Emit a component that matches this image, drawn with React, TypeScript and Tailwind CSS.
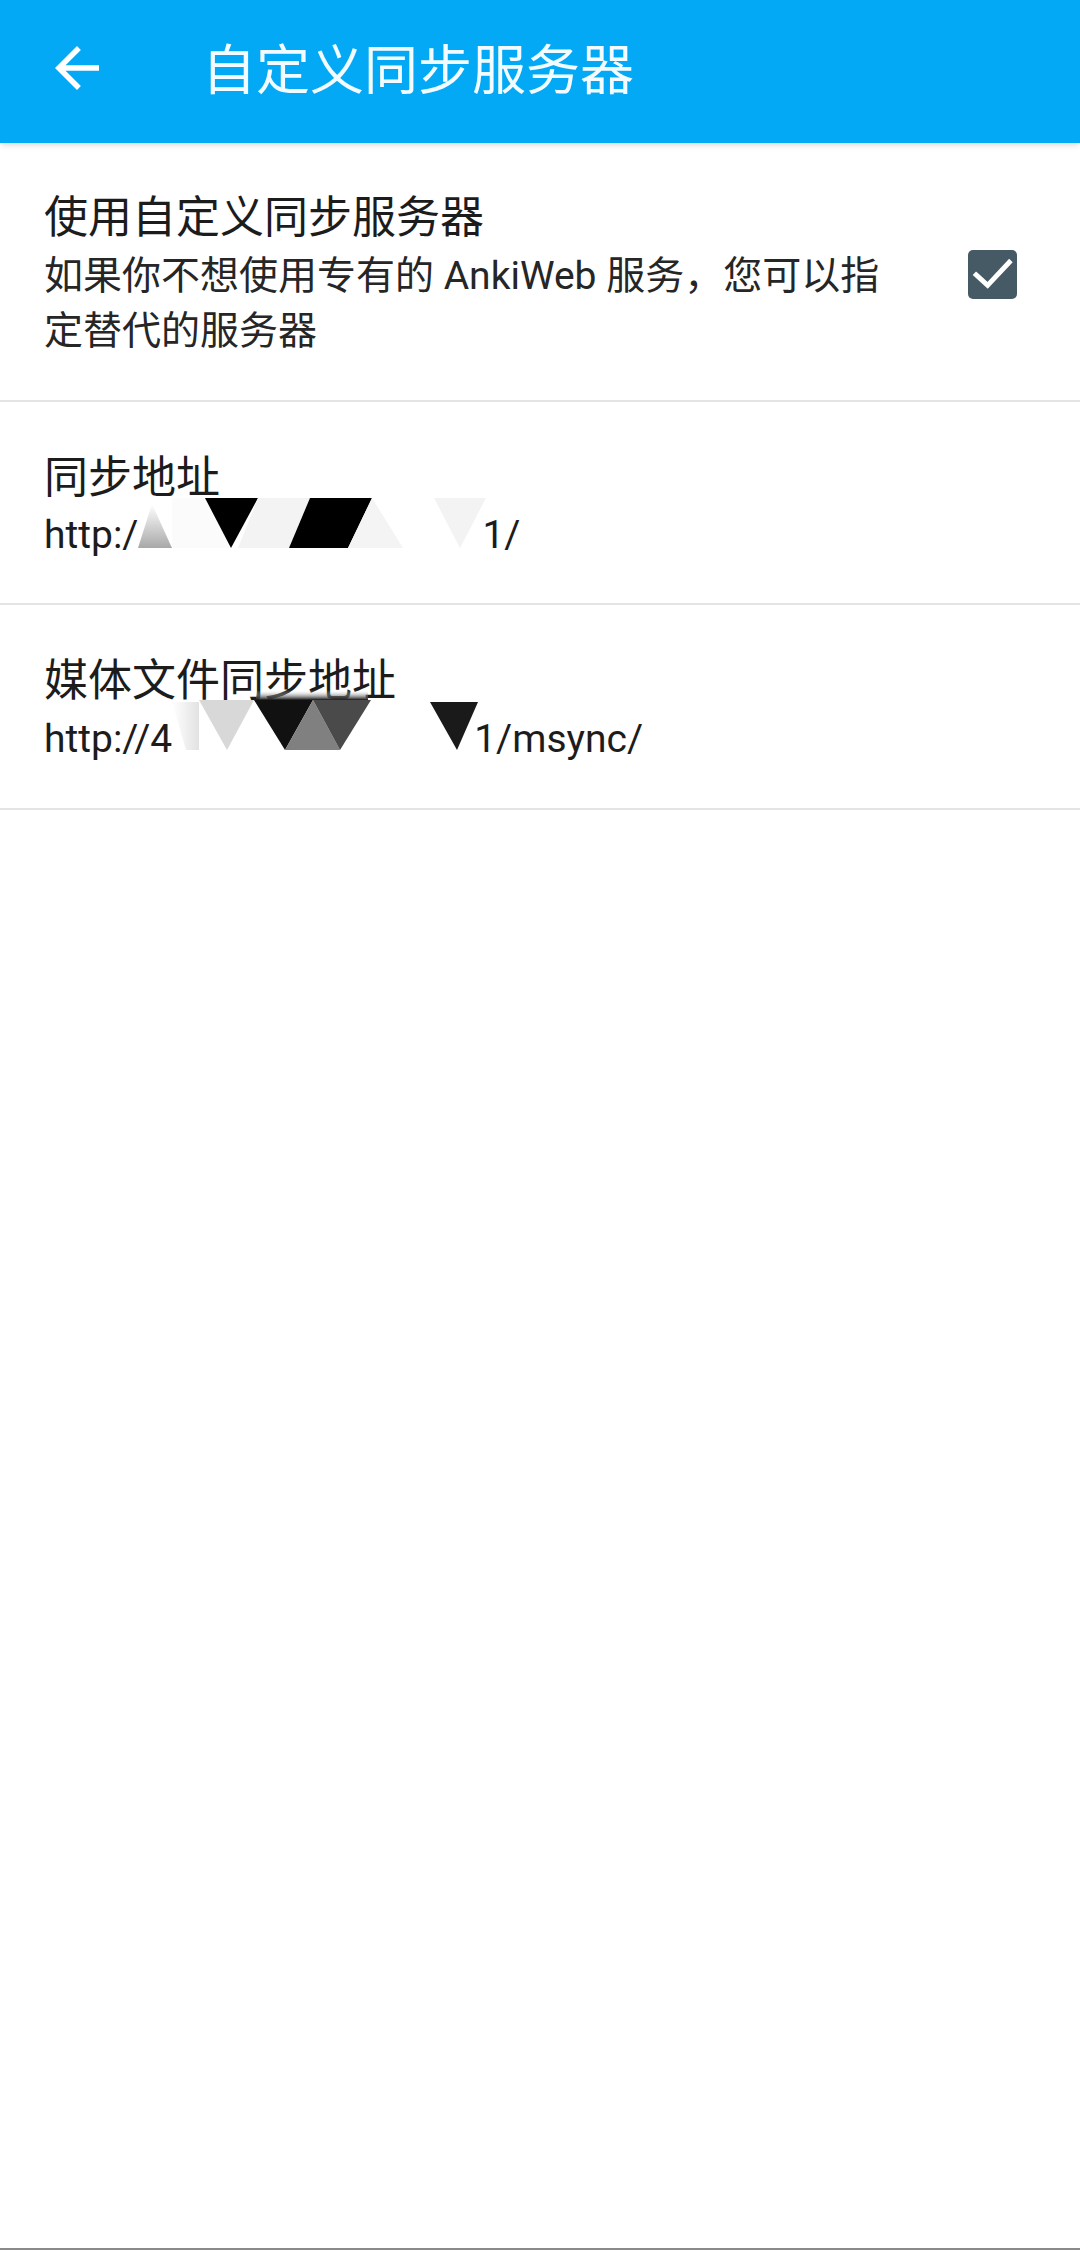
import React from "react";

const font = "font-['Roboto','Noto_Sans_CJK_SC',sans-serif]";

// Redaction marks drawn over the server address
const AddressMask: React.FC = () => (
  <svg width="348" height="50" viewBox="0 0 348 50" className="shrink-0 -translate-y-3">
    <defs>
      <linearGradient id="fadeA" x1="0" y1="0" x2="0" y2="1">
        <stop offset="0" stopColor="#ffffff" />
        <stop offset="1" stopColor="#a8a8a8" />
      </linearGradient>
    </defs>
    <polygon points="0,50 14,6 34,50" fill="url(#fadeA)" />
    <polygon points="34,0 67,0 93,50 34,50" fill="#fbfbfb" />
    <polygon points="67,0 120,0 93,50" fill="#000000" />
    <polygon points="120,0 172,0 151,50 100,50" fill="#f3f3f3" />
    <polygon points="172,0 234,0 210,50 151,50" fill="#000000" />
    <polygon points="234,0 265,50 210,50" fill="#f4f4f4" />
    <polygon points="296,0 348,0 322,50" fill="#f3f3f3" />
  </svg>
);

const MediaMask: React.FC = () => (
  <svg width="306" height="60" viewBox="0 0 306 60" className="shrink-0 -translate-y-[19px]">
    <defs>
      <linearGradient id="fadeB" x1="0" y1="0" x2="0" y2="1">
        <stop offset="0" stopColor="#ffffff" stopOpacity="0" />
        <stop offset="1" stopColor="#111111" />
      </linearGradient>
      <linearGradient id="fadeC" x1="0" y1="0" x2="1" y2="0">
        <stop offset="0" stopColor="#ffffff" />
        <stop offset="1" stopColor="#e2e2e2" />
      </linearGradient>
    </defs>
    <polygon points="0,12 27,12 27,60 14,60" fill="url(#fadeC)" />
    <polygon points="27,10 82,10 55,60" fill="#d8d8d8" />
    <rect x="84" y="0" width="112" height="10" fill="url(#fadeB)" />
    <polygon points="82,10 141,10 113,60" fill="#111111" />
    <polygon points="113,60 141,10 168,60" fill="#808080" />
    <polygon points="141,10 199,10 168,60" fill="#4a4a4a" />
    <polygon points="258,12 306,12 285,60" fill="#1a1a1a" />
  </svg>
);

export default function App() {
  return (
    <div className={`${font} w-[1080px] min-h-[2250px] bg-white flex flex-col`}>
      {/* App bar */}
      <div className="h-[143px] bg-[#03a9f4] flex items-center shadow-md relative z-10">
        <div className="w-[66px] h-[66px] ml-[44px] -mt-[8px] flex items-center justify-center">
          <svg viewBox="0 0 24 24" width="66" height="66" fill="white">
            <path d="M20 11H7.83l5.59-5.59L12 4l-8 8 8 8 1.41-1.41L7.83 13H20v-2z" />
          </svg>
        </div>
        <h1 className="ml-[92px] text-[54px] leading-none text-[#f2fbff] font-normal">自定义同步服务器</h1>
      </div>

      {/* Use custom server */}
      <div className="flex items-center pt-[47px] pb-[41px] border-b-2 border-[#e4e4e4]">
        <div className="ml-[44px] w-[850px]">
          <div className="text-[44px] leading-[56px] text-[#1c1c1c]">使用自定义同步服务器</div>
          <div className="mt-[3px] text-[39px] leading-[55px] text-[#262626]">
            如果你不想使用专有的 AnkiWeb 服务，您可以指定替代的服务器
          </div>
        </div>
        <div className="ml-[74px] w-[49px] h-[49px] rounded-[5px] bg-[#465a65] flex items-center justify-center">
          <svg viewBox="0 0 24 24" width="49" height="49" fill="none" stroke="white" strokeWidth="2.4" strokeLinecap="square">
            <path d="M4 12.2l5.6 5.1L20.2 6" />
          </svg>
        </div>
      </div>

      {/* Sync address */}
      <div className="pl-[44px] pt-[48px] pb-[39px] border-b-2 border-[#e4e4e4]">
        <div className="text-[44px] leading-[56px] text-[#1c1c1c]">同步地址</div>
        <div className="flex items-center text-[39px] leading-[58px] text-[#1c1c1c]">
          <span>http:/</span>
          <AddressMask />
          <span className="-ml-[4px]">1/</span>
        </div>
      </div>

      {/* Media sync address */}
      <div className="pl-[44px] pt-[48px] pb-[39px] border-b-2 border-[#e4e4e4]">
        <div className="text-[44px] leading-[56px] text-[#1c1c1c]">媒体文件同步地址</div>
        <div className="flex items-center text-[39px] leading-[58px] text-[#1c1c1c]">
          <span>http://4</span>
          <MediaMask />
          <span className="-ml-[4px]">1/msync/</span>
        </div>
      </div>

      <div className="flex-1" />
      <div className="h-[2px] bg-[#8a8a8a]" />
    </div>
  );
}
